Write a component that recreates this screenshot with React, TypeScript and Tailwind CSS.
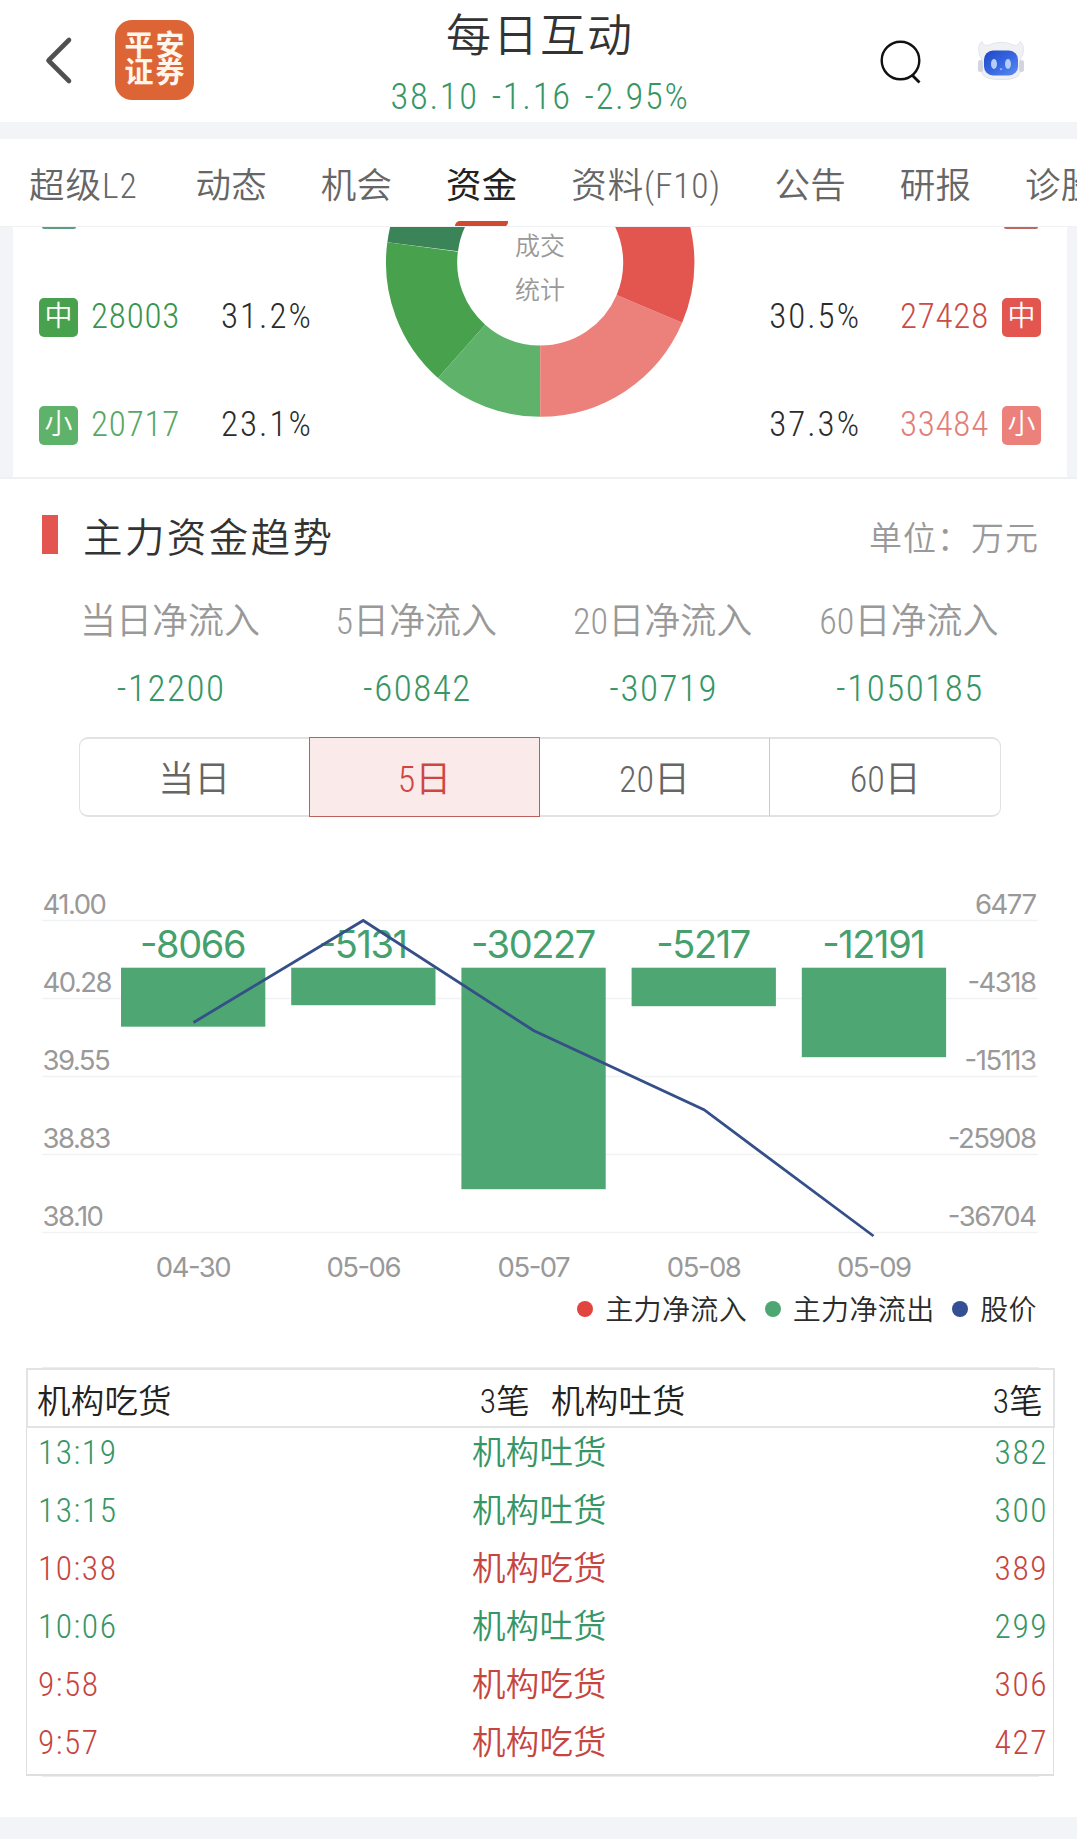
import clsx from "clsx";

const tabs = ["超级L2", "动态", "机会", "资金", "资料(F10)", "公告", "研报", "诊股"];

const sellOrders = [
  { tag: "中", value: "28003", percent: "31.2%", badge: "bg-[#48a14d]", text: "text-[#3a944b]" },
  { tag: "小", value: "20717", percent: "23.1%", badge: "bg-[#5fb26a]", text: "text-[#56a863]" },
];

const buyOrders = [
  { tag: "中", value: "27428", percent: "30.5%", badge: "bg-[#e3554f]", text: "text-[#cb4b45]" },
  { tag: "小", value: "33484", percent: "37.3%", badge: "bg-[#ec807b]", text: "text-[#e37d77]" },
];

const inflows = [
  { label: "当日净流入", value: "-12200" },
  { label: "5日净流入", value: "-60842" },
  { label: "20日净流入", value: "-30719" },
  { label: "60日净流入", value: "-1050185" },
];

const ranges = ["当日", "5日", "20日", "60日"];

const gridLines = [
  { price: "41.00", flow: "6477" },
  { price: "40.28", flow: "-4318" },
  { price: "39.55", flow: "-15113" },
  { price: "38.83", flow: "-25908" },
  { price: "38.10", flow: "-36704" },
];

const bars = [
  { date: "04-30", value: "-8066", height: 59 },
  { date: "05-06", value: "-5131", height: 37.5 },
  { date: "05-07", value: "-30227", height: 221.5 },
  { date: "05-08", value: "-5217", height: 38.5 },
  { date: "05-09", value: "-12191", height: 89.5 },
];

const legend = [
  { label: "主力净流入", dot: "bg-[#e0453f]" },
  { label: "主力净流出", dot: "bg-[#4ea772]" },
  { label: "股价", dot: "bg-[#344f94]" },
];

const trades = [
  { time: "13:19", type: "机构吐货", amount: "382", up: false },
  { time: "13:15", type: "机构吐货", amount: "300", up: false },
  { time: "10:38", type: "机构吃货", amount: "389", up: true },
  { time: "10:06", type: "机构吐货", amount: "299", up: false },
  { time: "9:58", type: "机构吃货", amount: "306", up: true },
  { time: "9:57", type: "机构吃货", amount: "427", up: true },
];

function Header() {
  return (
    <header className="flex h-[122px] items-start justify-between pr-[52px] pl-[44px]">
      <div className="flex w-[280px] items-start">
        <svg className="mt-[36px]" width="30" height="50" viewBox="0 0 30 50" fill="none" aria-hidden="true">
          <path d="M25 4 4.500 24.500 25 45" stroke="#505050" strokeWidth="4.600" strokeLinecap="round" strokeLinejoin="round" />
        </svg>
        <div className="mt-[20px] ml-[41px] flex h-[80px] w-[79px] flex-col items-center justify-center rounded-[17px] bg-[#dd6535] pl-[2px] text-[29px] leading-[27.500px] font-bold tracking-[2px] text-[#fff6ee]">
          <span>平安</span>
          <span>证券</span>
        </div>
      </div>

      <div className="flex flex-col items-center">
        <h1 className="mt-[8px] text-[45px] leading-[58px] tracking-[2px] text-[#333]">每日互动</h1>
        <div className="mt-px text-[36.500px] leading-[60px] tracking-[1.700px] text-[#369665] [word-spacing:3px]">
          38.10 -1.16 -2.95%
        </div>
      </div>

      <div className="flex w-[269px] items-start justify-end">
        <svg className="mt-[38px]" width="46" height="48" viewBox="0 0 46 48" fill="none" aria-hidden="true">
          <circle cx="22.500" cy="22.500" r="18.800" stroke="#111" strokeWidth="2.400" />
          <path d="M34.500 37.500 41.500 44.500" stroke="#111" strokeWidth="2.800" />
        </svg>
        <RobotIcon />
      </div>
    </header>
  );
}

function RobotIcon() {
  return (
    <svg className="mt-[40px] ml-[53px]" width="48" height="42" viewBox="0 0 48 42" fill="none" aria-hidden="true">
      <defs>
        <linearGradient id="visor" x1="0" y1="0" x2="1" y2="1">
          <stop offset="0" stopColor="#2148c4" />
          <stop offset="0.500" stopColor="#3565e0" />
          <stop offset="1" stopColor="#5b8df2" />
        </linearGradient>
      </defs>
      <path
        d="M2 13C1 8 2 3 5 1.500 6 5 9 6 12 5 19 1.500 29 1.500 36 5 39 6 42 5 43 1.500 46 3 47 8 46 13 46 16 44 17 43.500 19L43.500 30C43 37 38 39.500 24 39.500S5 37 4.500 30L4.500 19C4 17 2 16 2 13Z"
        fill="#f0f1f5"
        stroke="#dddfe6"
        strokeWidth="0.800"
      />
      <rect x="1" y="20" width="5" height="12" rx="2.500" fill="#d3d4dd" />
      <rect x="42" y="20" width="5" height="12" rx="2.500" fill="#d3d4dd" />
      <rect x="7" y="10.500" width="34" height="25" rx="9" fill="url(#visor)" />
      <ellipse cx="17" cy="24" rx="3" ry="5" fill="#b5cdfb" />
      <ellipse cx="31" cy="24" rx="3" ry="5" fill="#b5cdfb" />
      <path d="M22.500 28.500h3l-1.500 2z" fill="#b5cdfb" />
    </svg>
  );
}

function TabBar() {
  return (
    <nav className="flex h-[88px] gap-[53.700px] overflow-hidden border-b border-[#f1f1f4] pl-[29px] text-[35.500px] leading-[95px] tracking-[0.300px] whitespace-nowrap text-[#666]">
      {tabs.map((tab) => (
        <div
          key={tab}
          className={clsx(
            "relative shrink-0",
            tab === "资金" && "font-normal text-[#222]",
            tab === "超级L2" && "pr-[4px] tracking-[1px]",
            tab === "资料(F10)" && "tracking-[0.800px]"
          )}
        >
          {tab}
          {tab === "资金" && (
            <span className="absolute top-[82px] left-[9px] h-[6px] w-[53px] rounded-tl-[5px] rounded-br-[5px] bg-[#cf4a2f]" />
          )}
        </div>
      ))}
    </nav>
  );
}

function OrderColumn({ orders, reverse }: { orders: typeof sellOrders; reverse?: boolean }) {
  return (
    <div className="flex flex-col">
      {/* bottom edge of the large-order badge, scrolled under the tab bar */}
      <div className="flex h-[36px] items-start px-[3px]">
        <span
          className={clsx("h-[2px] w-[34px] rounded-b-[2px]", reverse ? "ml-auto bg-[#bd6763]" : "bg-[#5a9f80]")}
        />
      </div>
      {orders.map((o) => (
        <div key={o.tag} className={clsx("flex h-[108px] items-center text-[35px]", reverse && "flex-row-reverse")}>
          <span
            className={clsx(
              "flex h-[39px] w-[39px] items-center justify-center rounded-[5px] pb-px text-[28px] leading-none text-white",
              o.badge
            )}
          >
            {o.tag}
          </span>
          <span className={clsx("w-[116px] tracking-[0.800px]", reverse ? "pr-[13px] text-right" : "pl-[13px]", o.text)}>
            {o.value}
          </span>
          <span className={clsx("w-[118px] tracking-[2px] text-[#2b2b2b]", reverse ? "pr-[25px] text-right" : "pl-[27px]")}>
            {o.percent}
          </span>
        </div>
      ))}
    </div>
  );
}

function Donut() {
  return (
    <div className="relative">
      <svg width="310" height="190" viewBox="385 227 310 190" aria-hidden="true">
        <g fill="none" strokeWidth="71.200">
          <path d="M443 194A118.600 118.600 0 0 0 422.700 246.700" stroke="#3b8457" />
          <path d="M422.600 247A118.600 118.600 0 0 0 461.600 351.400" stroke="#48a14d" />
          <path d="M461.600 351.400A118.600 118.600 0 0 0 540.200 381.200" stroke="#5fb26a" />
          <path d="M540.200 381.200A118.600 118.600 0 0 0 649.400 308.900" stroke="#ec807b" />
          <path d="M649.400 308.900A118.600 118.600 0 0 0 637.500 194.800" stroke="#e3554f" />
        </g>
      </svg>
      <div className="absolute inset-x-0 -top-[2px] flex flex-col items-center text-[25px] leading-[43.500px] text-[#999]">
        <span>成交</span>
        <span>统计</span>
      </div>
    </div>
  );
}

function OrderStats() {
  return (
    <section className="h-[252px] overflow-hidden border-b-2 border-[#eff0f3] bg-[#f3f4f8] pr-[10px] pl-[13px]">
      <div className="flex h-full items-start justify-between bg-white px-[26px]">
        <OrderColumn orders={sellOrders} />
        <Donut />
        <OrderColumn orders={buyOrders} reverse />
      </div>
    </section>
  );
}

function FlowSummary() {
  return (
    <section>
      <div className="flex h-[80px] items-start justify-between pt-[36px] pr-[38px] pl-[42px]">
        <div className="flex items-start">
          <span className="h-[39px] w-[16px] bg-[#e3554f]" />
          <h2 className="mt-[2px] ml-[25px] text-[39.500px] leading-[44px] tracking-[2.400px] text-[#333]">主力资金趋势</h2>
        </div>
        <span className="mt-[2px] text-[33px] leading-[44px] tracking-[1px] text-[#999]">单位：万元</span>
      </div>

      <div className="mt-[33px] grid grid-cols-4 pr-[45px] pl-[47px] text-center">
        {inflows.map((f) => (
          <div key={f.label}>
            <div className="text-[36px] leading-[60px] text-[#999]">{f.label}</div>
            <div className="mt-[7px] ml-[2px] text-[37px] leading-[60px] tracking-[1.500px] text-[#369665]">{f.value}</div>
          </div>
        ))}
      </div>

      <div className="mt-[18px] mr-[76px] ml-[78.500px] grid h-[80px] grid-cols-4 text-center text-[36px] leading-[82px] text-[#666]">
        {ranges.map((r, i) => (
          <div
            key={r}
            className={clsx(
              "h-[80px]",
              r === "5日"
                ? "border border-[#bd5f5b] bg-[#faeaea] leading-[84px] text-[#cf4640]"
                : "border-y-2 border-[#e2e2e2]",
              i === 0 && "rounded-l-[9px] border-l",
              i === 2 && "border-r border-r-[#cacaca]",
              i === 3 && "rounded-r-[9px] border-r"
            )}
          >
            {r}
          </div>
        ))}
      </div>
    </section>
  );
}

function TrendChart() {
  return (
    <section>
      <svg
        className="block font-['Inter','Noto_Sans_CJK_SC',sans-serif] font-normal [font-feature-settings:'calt','case']"
        width="1077"
        height="466"
        viewBox="0 817 1077 466"
      >
        {gridLines.map((g, i) => (
          <line key={g.price} x1="42" x2="1038" y1={920.500 + i * 78} y2={920.500 + i * 78} stroke="#f1f2f4" strokeWidth="1.500" />
        ))}
        {gridLines.map((g, i) => (
          <g key={g.price} fontSize="27.500" letterSpacing="-1.500" fill="#999">
            <text x="42.500" y={914 + i * 78}>
              {g.price}
            </text>
            <text x="1035.500" y={914 + i * 78} textAnchor="end">
              {g.flow}
            </text>
          </g>
        ))}
        {bars.map((b, i) => (
          <g key={b.date} textAnchor="middle">
            <rect x={121 + i * 170.200} y="967.700" width="144.300" height={b.height} fill="#4ea772" />
            <text x={192.500 + i * 170.200} y="957.500" fontSize="38" letterSpacing="-1.400" fill="#45a06d">
              {b.value}
            </text>
            <text x={193 + i * 170.200} y="1277" fontSize="27.500" letterSpacing="-1.500" fill="#999">
              {b.date}
            </text>
          </g>
        ))}
        <polyline
          points="193.500,1022.500 363.200,920.500 533.500,1030.500 704,1109.700 873.500,1236"
          fill="none"
          stroke="#354f88"
          strokeWidth="2.800"
        />
      </svg>

      <div className="flex h-[52px] items-center justify-end gap-[17.500px] pr-[40px] text-[28px] leading-[52px] tracking-[0.400px] text-[#2b2b2b]">
        {legend.map((l) => (
          <div key={l.label} className="flex items-center gap-[12px]">
            <span className={clsx("h-[16px] w-[16px] rounded-full", l.dot)} />
            <span className="pt-[3px]">{l.label}</span>
          </div>
        ))}
      </div>
    </section>
  );
}

function TradeTable() {
  return (
    <section className="mt-[32px] mr-[22px] ml-[26px]">
      <div className="mx-[16px] h-px bg-[#eceded]" />
      <div className="flex h-[60px] border-2 border-[#e2e3e3] pr-[10px] pl-[9px] text-[33.500px] leading-[63px] tracking-[0.200px] text-[#222]">
        <div className="flex w-[493px] justify-between">
          <span>机构吃货</span>
          <span>3笔</span>
        </div>
        <div className="ml-[21px] flex flex-1 justify-between">
          <span>机构吐货</span>
          <span>3笔</span>
        </div>
      </div>
      <div className="mr-px h-[348px] border-x border-b-2 border-[#dfdfdf] pr-[5px] pl-[11px]">
        {trades.map((t) => (
          <div
            key={t.time}
            className={clsx(
              "grid h-[58px] grid-cols-[434px_1fr_auto] text-[33.500px] leading-[50px] tracking-[0.200px]",
              t.up ? "text-[#c6453f]" : "text-[#369665]"
            )}
          >
            <span className="tracking-[1.500px]">{t.time}</span>
            <span>{t.type}</span>
            <span className="tracking-[1.500px]">{t.amount}</span>
          </div>
        ))}
      </div>
      <div className="mx-[16px] h-px bg-[#eceded]" />
    </section>
  );
}

export default function App() {
  return (
    <div className="flex h-[1839px] w-[1077px] flex-col overflow-hidden bg-white font-['Roboto','Noto_Sans_CJK_SC',sans-serif] font-[350] [font-stretch:75%]">
      <Header />
      <div className="h-[17px] bg-[#f3f4f8]" />
      <TabBar />
      <OrderStats />
      <FlowSummary />
      <TrendChart />
      <TradeTable />
      <div className="mt-auto h-[22px] bg-[#f3f4f8]" />
    </div>
  );
}
